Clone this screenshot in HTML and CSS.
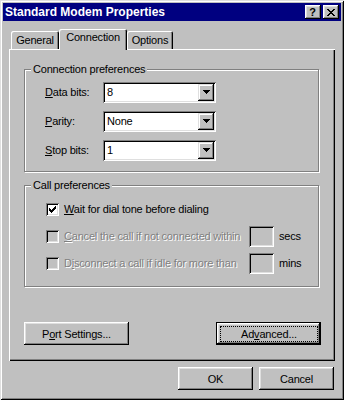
FILE: index.html
```html
<!DOCTYPE html>
<html lang="en">
<head>
    <meta charset="UTF-8">
    <title>Standard Modem Properties</title>
    <link rel="stylesheet" href="styles.css">
</head>
<body>
<div class="window">
    <div class="titlebar">
        <span class="title">Standard Modem Properties</span>
        <div class="title-buttons">
            <span class="tbtn help">?</span>
            <span class="tbtn close">
                <svg width="8" height="7" viewBox="0 0 8 7" shape-rendering="crispEdges"><path d="M0 0h2v1H0z M6 0h2v1H6z M1 1h2v1H1z M5 1h2v1H5z M2 2h4v1H2z M3 3h2v1H3z M2 4h4v1H2z M1 5h2v1H1z M5 5h2v1H5z M0 6h2v1H0z M6 6h2v1H6z" fill="#000"/></svg>
            </span>
        </div>
    </div>

    <div class="content">
        <div class="tabs">
            <div class="tab tab-general">General</div>
            <div class="tab tab-connection active">Connection</div>
            <div class="tab tab-options">Options</div>
        </div>

        <div class="panel">
            <!-- connection preferences -->
            <div class="group prefs">
                <span class="legend">Connection preferences</span>
                <div class="field">
                    <label><u>D</u>ata bits:</label>
                    <div class="combo"><span class="value">8</span><span class="drop"><svg width="7" height="4" viewBox="0 0 7 4" shape-rendering="crispEdges"><path d="M0 0h7v1H0z M1 1h5v1H1z M2 2h3v1H2z M3 3h1v1H3z" fill="#000"/></svg></span></div>
                </div>
                <div class="field">
                    <label><u>P</u>arity:</label>
                    <div class="combo"><span class="value">None</span><span class="drop"><svg width="7" height="4" viewBox="0 0 7 4" shape-rendering="crispEdges"><path d="M0 0h7v1H0z M1 1h5v1H1z M2 2h3v1H2z M3 3h1v1H3z" fill="#000"/></svg></span></div>
                </div>
                <div class="field">
                    <label><u>S</u>top bits:</label>
                    <div class="combo"><span class="value">1</span><span class="drop"><svg width="7" height="4" viewBox="0 0 7 4" shape-rendering="crispEdges"><path d="M0 0h7v1H0z M1 1h5v1H1z M2 2h3v1H2z M3 3h1v1H3z" fill="#000"/></svg></span></div>
                </div>
            </div>

            <!-- call preferences -->
            <div class="group calls">
                <span class="legend">Call preferences</span>
                <div class="row">
                    <span class="check checked"><svg width="7" height="7" viewBox="0 0 7 7" shape-rendering="crispEdges"><path d="M6 0h1v1H6z M5 1h2v1H5z M0 2h1v1H0z M4 2h3v1H4z M0 3h2v1H0z M3 3h3v1H3z M0 4h5v1H0z M1 5h3v1H1z M2 6h1v1H2z" fill="#000"/></svg></span>
                    <span class="text"><u>W</u>ait for dial tone before dialing</span>
                </div>
                <div class="row">
                    <span class="check disabled"></span>
                    <span class="text wide dim"><u>C</u>ancel the call if not connected within</span>
                    <span class="edit"></span>
                    <span class="unit">secs</span>
                </div>
                <div class="row">
                    <span class="check disabled"></span>
                    <span class="text wide dim">D<u>i</u>sconnect a call if idle for more than</span>
                    <span class="edit"></span>
                    <span class="unit">mins</span>
                </div>
            </div>

            <div class="panel-buttons">
                <button class="btn wide-btn">P<u>o</u>rt Settings...</button>
                <button class="btn wide-btn default"><span class="focus">Ad<u>v</u>anced...</span></button>
            </div>
        </div>

        <div class="dialog-buttons">
            <button class="btn">OK</button>
            <button class="btn">Cancel</button>
        </div>
    </div>
</div>
</body>
</html>
```

FILE: styles.css
```css
* {
    padding: 0;
    margin: 0;
    box-sizing: border-box;
}
body {
    width: 344px;
    height: 400px;
    font-family: "Liberation Sans", Arial, sans-serif;
    font-size: 11px;
    line-height: 13px;
    color: #000;
    background-color: #c0c0c0;
}
u {
    text-decoration: underline;
    text-underline-offset: 1px;
}

/* window frame */
.window {
    width: 344px;
    height: 400px;
    padding: 3px;
    background-color: #c0c0c0;
    box-shadow: inset 1px 1px #dfdfdf, inset -1px -1px #000,
                inset 2px 2px #fff, inset -2px -2px #808080;
    display: flex;
    flex-direction: column;
}
.titlebar {
    height: 18px;
    background-color: #000080;
    color: #fff;
    display: flex;
    align-items: center;
    justify-content: space-between;
    padding: 0 2px;
}
.title {
    font-weight: bold;
    font-size: 12px;
}
.title-buttons {
    display: flex;
    gap: 2px;
}
.tbtn {
    width: 16px;
    height: 14px;
    background-color: #c0c0c0;
    color: #000;
    box-shadow: inset -1px -1px #000, inset 1px 1px #fff,
                inset -2px -2px #808080, inset 2px 2px #dfdfdf;
    display: flex;
    align-items: center;
    justify-content: center;
}
.tbtn.help {
    font-weight: bold;
    font-size: 11px;
    padding-right: 1px;
}
.tbtn.close svg {
    display: block;
    margin-left: -1px;
}

.content {
    flex: 1;
    padding: 8px 6px 0 6px;
    display: flex;
    flex-direction: column;
    letter-spacing: -0.2px;
}

/* tabs */
.tabs {
    display: flex;
    align-items: flex-end;
    height: 20px;
    padding-left: 2px;
}
.tab {
    height: 18px;
    padding-top: 3px;
    text-align: center;
    background-color: #c0c0c0;
    border-radius: 2px 2px 0 0;
    box-shadow: inset 1px 1px #fff, inset -1px 0 #000, inset -2px 0 #808080;
}
.tab-general {
    width: 48px;
}
.tab-connection {
    width: 68px;
}
.tab-options {
    width: 46px;
}
.tab.active {
    height: 21px;
    padding-top: 2px;
    margin-bottom: -1px;
    position: relative;
    z-index: 1;
}

.panel {
    width: 326px;
    height: 312px;
    padding: 20px 16px 0 15px;
    box-shadow: inset 1px 1px #fff, inset -1px -1px #000, inset -2px -2px #808080;
}

/* group boxes */
.group {
    position: relative;
    border: 1px solid #808080;
    box-shadow: inset 1px 1px #fff, 1px 1px #fff;
    display: flex;
    flex-direction: column;
}
.legend {
    position: absolute;
    top: -7px;
    left: 6px;
    padding: 0 2px 0 2px;
    background-color: #c0c0c0;
}
.prefs {
    height: 103px;
    margin-bottom: 13px;
    padding: 12px 0 0 20px;
    gap: 8px;
}
.calls {
    height: 102px;
    padding: 13px 0 0 21px;
    gap: 6px;
}

.field {
    display: flex;
    align-items: center;
    height: 21px;
}
.field label {
    width: 58px;
}
.combo {
    width: 113px;
    height: 21px;
    padding: 2px;
    background-color: #fff;
    box-shadow: inset 1px 1px #808080, inset -1px -1px #fff,
                inset 2px 2px #000, inset -2px -2px #dfdfdf;
    display: flex;
}
.combo .value {
    flex: 1;
    padding-left: 2px;
    line-height: 17px;
}
.drop {
    width: 16px;
    height: 17px;
    background-color: #c0c0c0;
    box-shadow: inset -1px -1px #000, inset 1px 1px #dfdfdf,
                inset -2px -2px #808080, inset 2px 2px #fff;
    display: flex;
    align-items: center;
    justify-content: center;
    padding-bottom: 1px;
}
.drop svg {
    display: block;
}

/* check rows */
.row {
    display: flex;
    align-items: center;
    height: 21px;
}
.check {
    width: 13px;
    height: 13px;
    margin-right: 5px;
    background-color: #fff;
    box-shadow: inset 1px 1px #808080, inset -1px -1px #fff,
                inset 2px 2px #000, inset -2px -2px #dfdfdf;
    padding: 3px;
}
.check svg {
    display: block;
}
.check.disabled {
    background-color: #c0c0c0;
}
.text.wide {
    width: 185px;
    white-space: nowrap;
}
.dim {
    color: #808080;
    text-shadow: 1px 1px 0 #fff;
}
.edit {
    width: 25px;
    height: 21px;
    background-color: #c0c0c0;
    box-shadow: inset 1px 1px #808080, inset -1px -1px #fff,
                inset 2px 2px #000, inset -2px -2px #dfdfdf;
}
.unit {
    margin-left: 5px;
}

/* buttons */
.btn {
    width: 75px;
    height: 23px;
    border: none;
    font-family: "Liberation Sans", Arial, sans-serif;
    font-size: 11px;
    letter-spacing: -0.2px;
    color: #000;
    background-color: #c0c0c0;
    box-shadow: inset -1px -1px #000, inset 1px 1px #fff,
                inset -2px -2px #808080, inset 2px 2px #dfdfdf;
    display: flex;
    align-items: center;
    justify-content: center;
}
.wide-btn {
    width: 105px;
}
.btn.default {
    box-shadow: inset 0 0 0 1px #000, inset -2px -2px #000, inset 2px 2px #fff,
                inset -3px -3px #808080, inset 3px 3px #dfdfdf;
    align-items: stretch;
}
.focus {
    flex: 1;
    margin: 4px 3px 3px 4px;
    border: 1px dotted #000;
    display: flex;
    align-items: center;
    justify-content: center;
}
.panel-buttons {
    display: flex;
    justify-content: space-between;
    margin-top: 35px;
    margin-right: -2px;
}
.dialog-buttons {
    display: flex;
    justify-content: flex-end;
    gap: 6px;
    margin-top: 6px;
    padding-right: 1px;
}
```
